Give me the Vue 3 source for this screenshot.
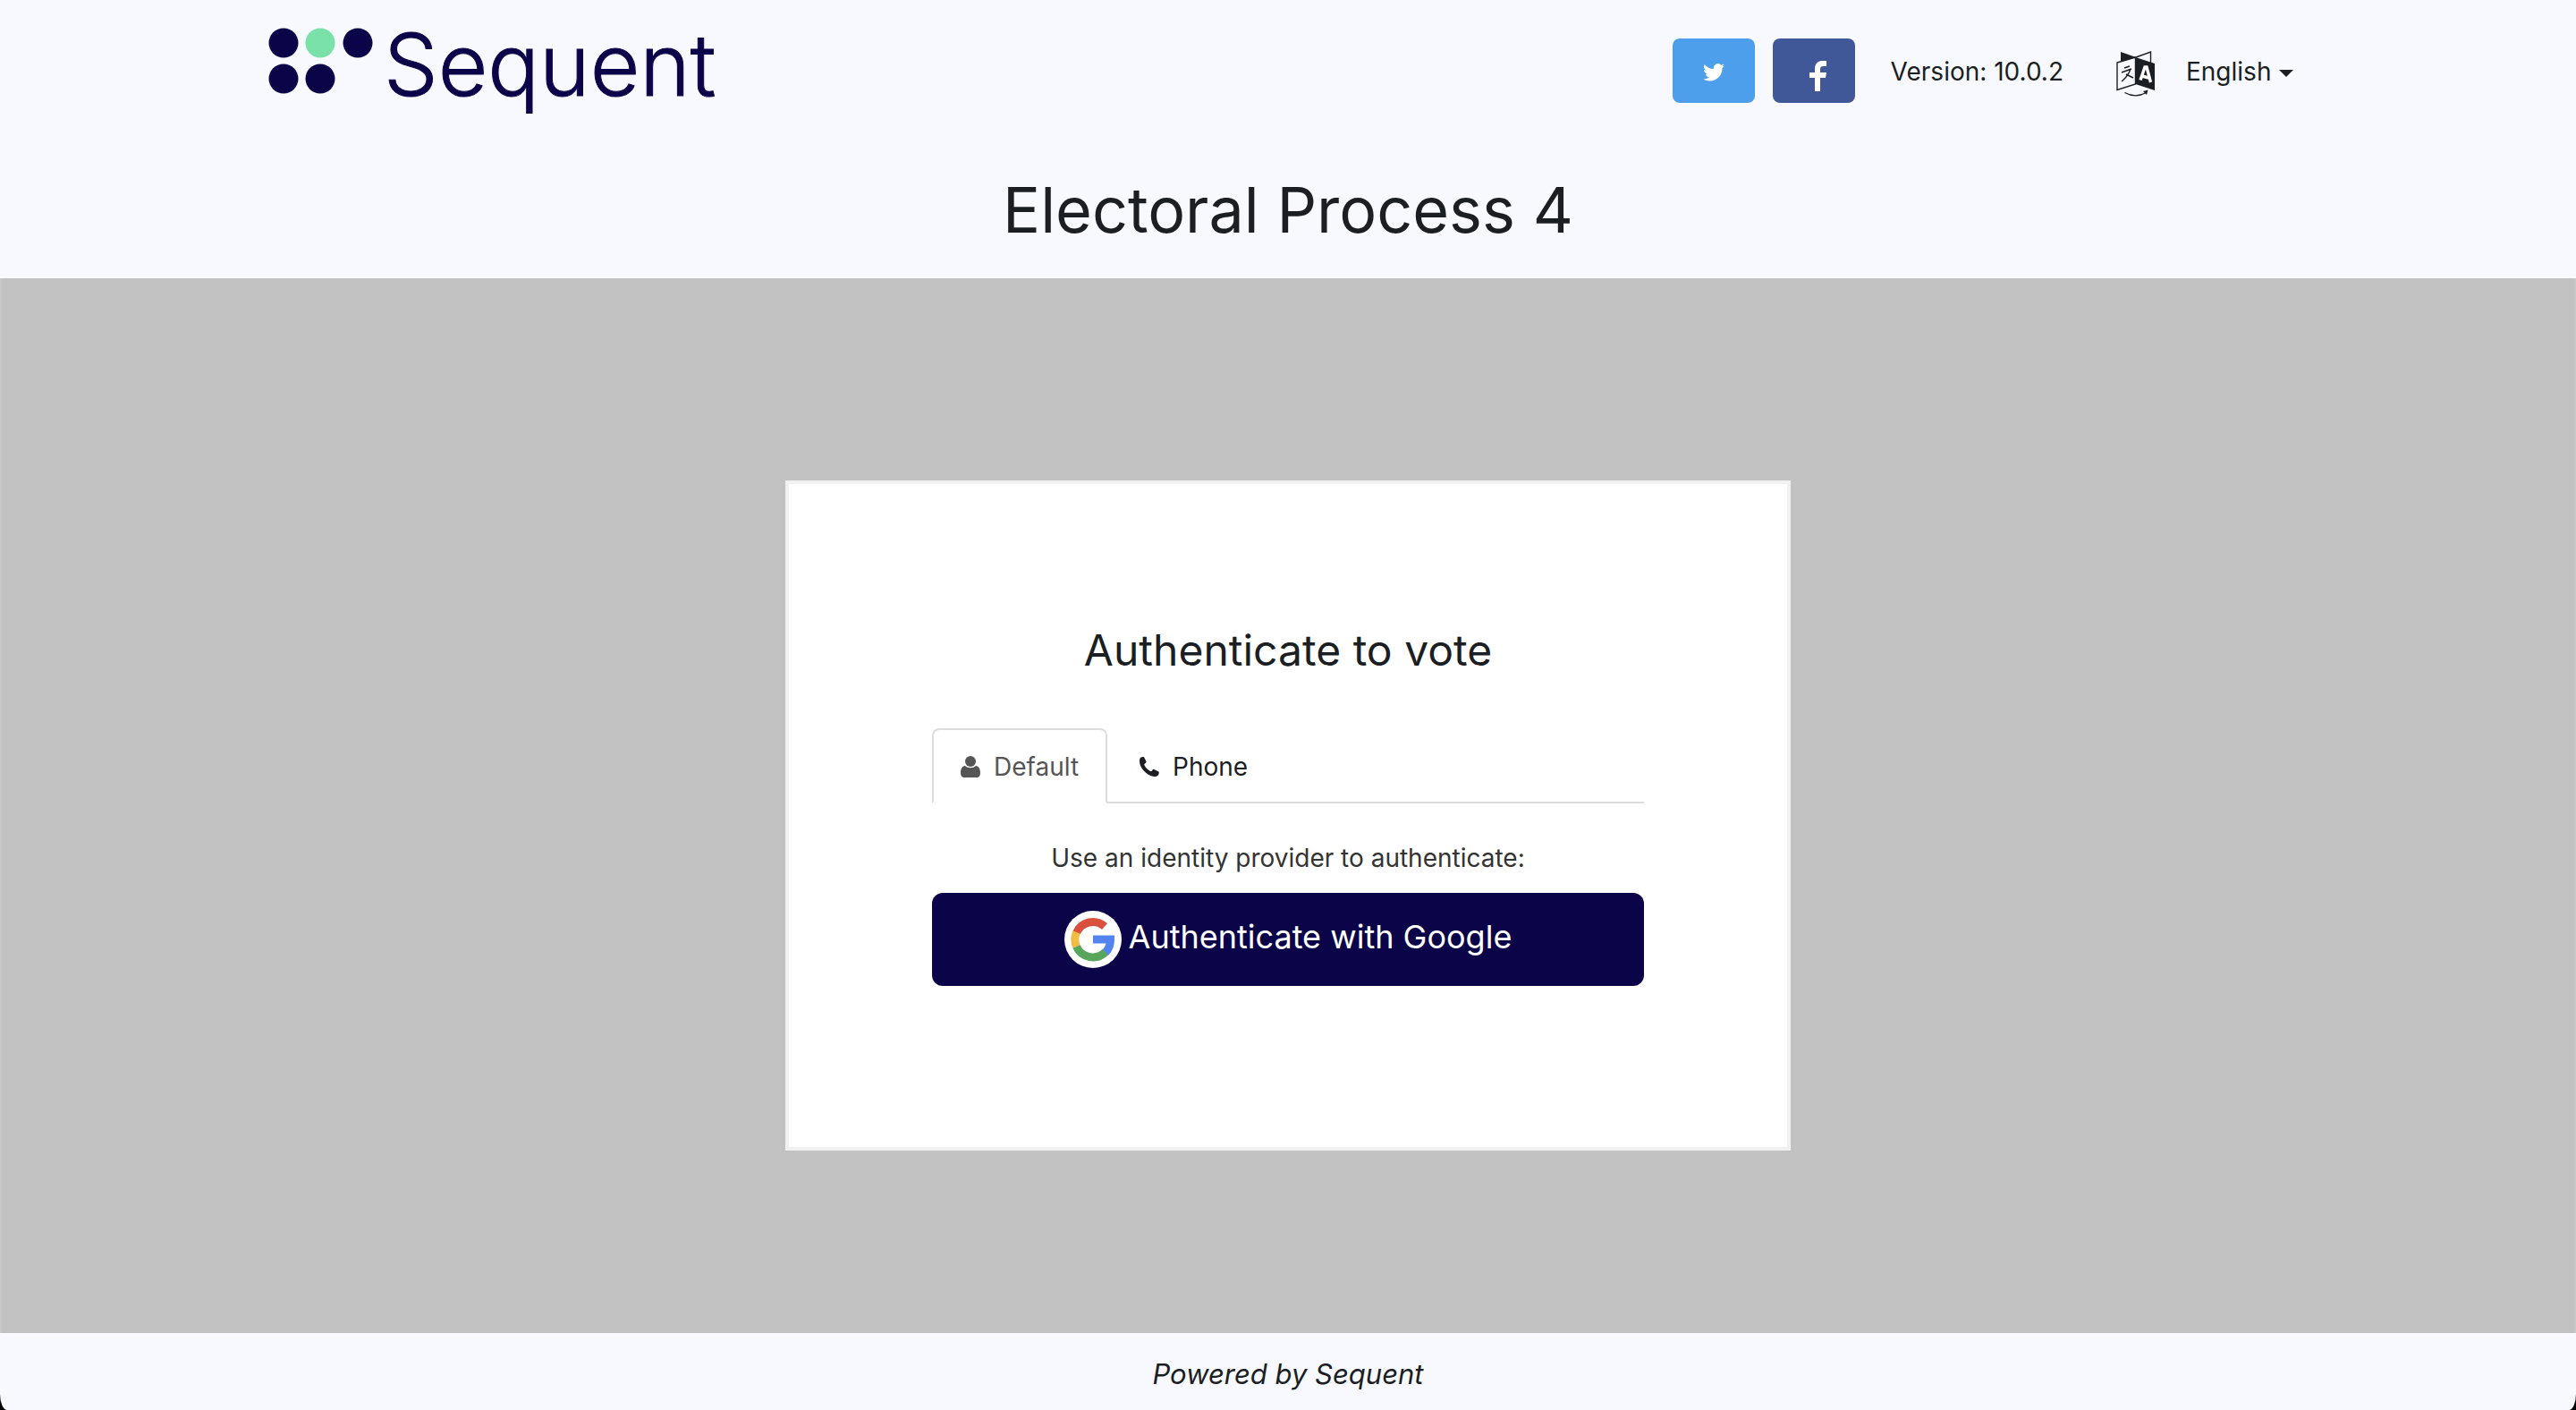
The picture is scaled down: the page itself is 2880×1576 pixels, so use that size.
<script setup>
import { ref } from 'vue'

const language = ref('en')
const activeTab = ref('default')
</script>

<template>
  <div class="page">
    <header class="topbar">
      <a class="brand" href="#" aria-label="Sequent home">
        <svg class="brand-dots" viewBox="0 0 118 74" aria-hidden="true">
          <circle cx="17" cy="17" r="16.5" />
          <circle class="accent" cx="58" cy="17" r="16.5" />
          <circle cx="100" cy="17" r="16.5" />
          <circle cx="17" cy="57" r="16.5" />
          <circle cx="58" cy="57" r="16.5" />
        </svg>
        <span class="brand-name">Sequent</span>
      </a>
      <nav class="tools">
        <a class="social twitter" href="#" aria-label="Twitter">
          <svg class="bird" viewBox="0 0 24 20" aria-hidden="true">
            <path d="M24 2.4c-.9.4-1.800.6-2.800.8 1-.6 1.800-1.600 2.200-2.700-1 .5-2 .9-3.100 1.200A4.920 4.920 0 0 0 11.900 6.100C7.700 5.900 4.100 3.900 1.700.9.400 3.100 1 6.100 3.200 7.500c-.8 0-1.600-.2-2.200-.6v.1c0 2.300 1.600 4.400 3.900 4.800-.7.200-1.500.2-2.200.1.600 2 2.400 3.400 4.600 3.400A9.900 9.900 0 0 1 0 17.300 13.900 13.900 0 0 0 7.500 19.500c9.100 0 14.300-7.700 14-14.600 1-.7 1.800-1.600 2.500-2.500z" />
          </svg>
        </a>
        <a class="social facebook" href="#" aria-label="Facebook">
          <svg class="effmark" viewBox="0 0 20 34" aria-hidden="true">
            <path d="M6 34V19H0v-6h6V9c0-6 3.500-9 8.500-9H19v6h-3.500C13 6 12 7 12 9.500V13h7l-1 6h-6v15z" />
          </svg>
        </a>
        <span class="version">Version: 10.0.2</span>
        <div class="language">
          <label for="language" aria-label="Language">
            <svg class="translate" viewBox="0 0 44 51" aria-hidden="true">
              <path class="solid" d="M5 1 22 7 5 12z" />
              <path class="line" d="M22 7 38.500 1v12" />
              <path class="line" d="M1 13 21.500 7v30L1 43.500z" />
              <path class="solid" d="M21.500 7 43 14v30L21.500 37z" />
              <path class="line" d="M9 19l6-2M6 24l11-4M16 20c-2 6-5 10-10 14M11 26l8 4" />
              <path class="letter" d="M27 32.500 32 18l2 0 4.500 17M29 28l7 2" />
              <path class="line" d="M9.500 46.500c8 4.500 17 4 24 0" />
              <path class="solid" d="M30 45l5.500-1.500L34 49z" />
            </svg>
          </label>
          <select id="language" v-model="language">
            <option value="en">English</option>
          </select>
          <svg class="caret" viewBox="0 0 16 8" aria-hidden="true"><path d="M0 0h16L8 8z" /></svg>
        </div>
      </nav>
    </header>

    <h1>Electoral Process 4</h1>

    <main>
      <section class="card">
        <h2>Authenticate to vote</h2>
        <div class="tabs" role="tablist">
          <button type="button" role="tab" class="tab" :class="{ active: activeTab === 'default' }" :aria-selected="activeTab === 'default'" @click="activeTab = 'default'">
            <svg viewBox="0 0 22 24" aria-hidden="true">
              <circle cx="11" cy="6" r="6" />
              <path d="M5 11c3.500 3 8.500 3 12 0 3.500.3 5 4 5 8 0 3-1.500 5-4 5H4c-2.500 0-4-2-4-5 0-4 1.500-7.700 5-8z" />
            </svg>
            <span>Default</span>
          </button>
          <button type="button" role="tab" class="tab" :class="{ active: activeTab === 'phone' }" :aria-selected="activeTab === 'phone'" @click="activeTab = 'phone'">
            <svg viewBox="0 0 22 24" aria-hidden="true">
              <path d="M1.500 1.500C3 .8 4.500.7 5 1.200L7.500 6c.3 1-.5 1.800-1.500 2.500-.8.600-.8 1.200-.3 2.200 1.600 2.800 3.200 4.300 6 6 1 .5 1.500.5 2.200-.3.700-1 1.500-1.800 2.500-1.500l5 2.600c.6.500.4 2-.3 3.500-1 1.600-3 2.200-5 2C8 22 0 13 0 6c0-2 .4-3.600 1.500-4.500z" />
            </svg>
            <span>Phone</span>
          </button>
        </div>
        <p class="hint">Use an identity provider to authenticate:</p>
        <button type="button" class="google">
          <svg viewBox="0 0 64 64" aria-hidden="true">
            <circle cx="32" cy="32" r="32" fill="#fff" />
            <g fill="none" stroke-width="9">
              <path stroke="#d9503f" d="M13.500 24.500A20 20 0 0 1 45 17.500" />
              <path stroke="#f2bd42" d="M13.500 40A20 20 0 0 1 13.500 24" />
              <path stroke="#58a55c" d="M46 46A20 20 0 0 1 13.500 40" />
              <path stroke="#5383ec" d="M32 32h19.500c0 6-1.500 10.500-5.500 14.500" />
            </g>
          </svg>
          <span>Authenticate with Google</span>
        </button>
      </section>
    </main>

    <footer>Powered by <a href="#">Sequent</a></footer>
  </div>
</template>

<style>
body {
  margin: 0;
  background: #000;
}
</style>

<style scoped>
.page {
  display: flex;
  flex-direction: column;
  min-height: 100vh;
  overflow: hidden;
  border-radius: 0 0 8px 8px / 0 0 18px 18px;
  background: #f8f9fe;
  color: #1b1e23;
  font-family: Inter, "Liberation Sans", sans-serif;
  font-size: 28px;
  line-height: 40px;
}
a {
  color: inherit;
  text-decoration: none;
}
button,
select {
  font: inherit;
  cursor: pointer;
}
.topbar {
  display: flex;
  justify-content: space-between;
  box-sizing: border-box;
  width: 100%;
  max-width: 2340px;
  margin: 0 auto;
  padding: 0 46px 0 30px;
  height: 160px;
}
.brand {
  display: flex;
  gap: 11px;
  color: #0c0449;
}
.brand-dots {
  width: 118px;
  height: 74px;
  margin-top: 31px;
  fill: #0c0449;
}
.brand-dots .accent {
  fill: #7ae2a8;
}
.brand-name {
  margin-top: 12px;
  font-size: 96px;
  font-weight: 300;
  line-height: 120px;
  -webkit-text-stroke: 1px #0c0449;
}
.tools {
  display: flex;
  align-items: center;
  height: 72px;
  margin-top: 43px;
}
.social {
  display: flex;
  align-items: center;
  justify-content: center;
  width: 92px;
  height: 72px;
  margin-right: 20px;
  border-radius: 8px;
  fill: #fff;
}
.twitter {
  background: #4d9fec;
}
.facebook {
  background: #415898;
}
.bird {
  width: 24px;
  height: 20px;
  margin-top: 4px;
}
.effmark {
  width: 20px;
  height: 34px;
  margin: 12px 0 0 10px;
}
.version {
  margin: 2px 0 0 20px;
}
.language {
  display: flex;
  align-items: center;
  margin: 2px 0 0 59px;
}
.language label {
  display: flex;
}
.translate {
  width: 44px;
  height: 51px;
  margin: 4px 34px 0 0;
}
.translate .solid,
.caret {
  fill: #1b1e23;
}
.translate .line {
  fill: none;
  stroke: #1b1e23;
  stroke-width: 1.4;
}
.translate .letter {
  fill: none;
  stroke: #fff;
  stroke-width: 3.4;
}
select {
  appearance: none;
  padding: 0;
  border: 0;
  background: none;
  color: inherit;
}
.caret {
  width: 16px;
  height: 8px;
  margin: 4px 0 0 8px;
}
h1 {
  margin: 0;
  padding: 35px 0 36px;
  font-size: 70px;
  font-weight: 400;
  line-height: 80px;
  text-align: center;
}
main {
  flex: 1;
  padding: 226px 0 204px;
  border: solid #c8c8c8;
  border-width: 0 2px;
  background: #c2c2c2;
}
.card {
  box-sizing: border-box;
  max-width: 1124px;
  margin: 0 auto;
  padding: 156px 160px 180px;
  border: 4px solid #f1f1f1;
  background: #fff;
}
h2 {
  margin: 0 0 57px;
  font-size: 48px;
  font-weight: 400;
  line-height: 60px;
  text-align: center;
}
.tabs {
  display: flex;
  gap: 4px;
  border-bottom: 2px solid #ddd;
}
.tab {
  display: flex;
  align-items: center;
  gap: 15px;
  height: 84px;
  margin-bottom: -2px;
  padding: 2px 30px 0;
  border: 2px solid transparent;
  border-radius: 8px 8px 0 0;
  background: none;
  color: #1b1e23;
}
.tab svg {
  width: 22px;
  height: 24px;
  fill: currentColor;
}
.tab.active {
  border-color: #ddd #ddd #fff;
  background: #fff;
  color: #555;
}
.hint {
  margin: 41px 0 19px;
  color: #333;
  text-align: center;
}
.google {
  display: flex;
  align-items: center;
  justify-content: center;
  gap: 8px;
  width: 100%;
  height: 104px;
  padding: 0;
  border: 0;
  border-radius: 12px;
  background: #0c0449;
  color: #fff;
  font-size: 36px;
}
.google span {
  padding-bottom: 6px;
}
.google svg {
  width: 64px;
  height: 64px;
}
footer {
  height: 86px;
  font-size: 31px;
  font-style: italic;
  line-height: 92px;
  text-align: center;
}
</style>
